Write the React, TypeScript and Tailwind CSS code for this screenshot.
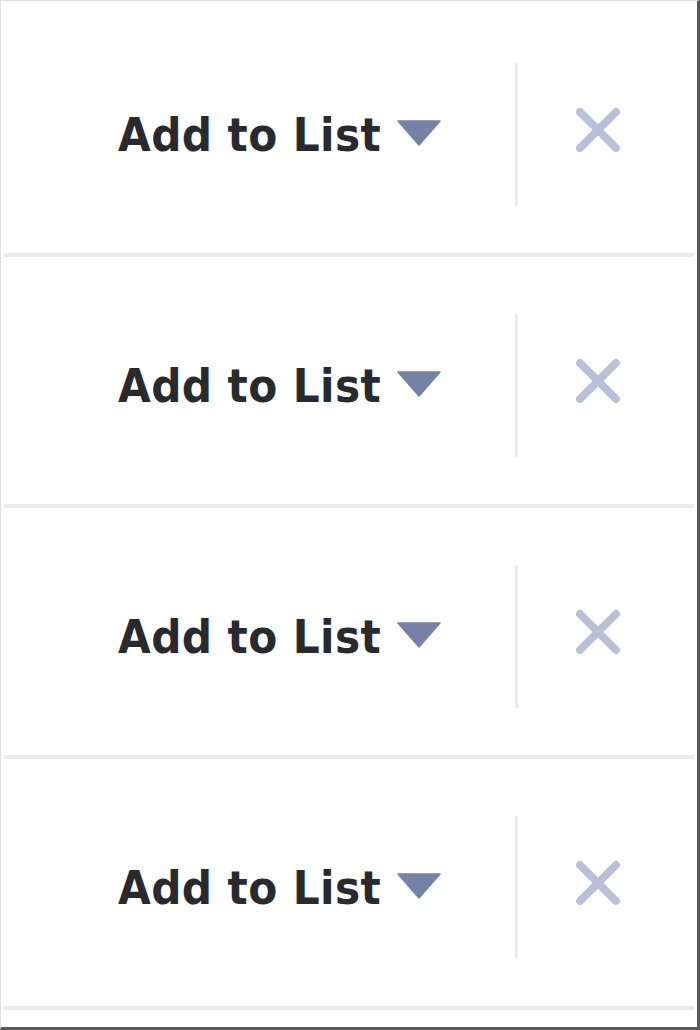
import React from "react";

function Row() {
  return (
    <div className="mx-[3px] flex h-[251px] items-center border-b-4 border-[#ebebed]">
      <div className="flex w-[511px] items-center pl-[114px] pt-[10px]">
        <span
          className="text-[47px] font-bold leading-none text-[#282a2e] tracking-[0.4px]"
          style={{ fontFamily: '"DejaVu Sans Condensed", "DejaVu Sans", sans-serif' }}
        >
          Add to List
        </span>
        <svg className="ml-[15px] -mt-[3px]" width="46" height="26" viewBox="0 0 46 26">
          <polygon points="2,1 44,1 23,25" fill="#7482a6" stroke="#7482a6" strokeWidth="1.5" strokeLinejoin="round" />
        </svg>
      </div>
      <div className="mt-[10px] h-[143px] w-[3px] bg-[#ececec]" />
      <div className="flex flex-1 items-center justify-center pr-[16px]">
        <svg width="50" height="50" viewBox="0 0 50 50" style={{ filter: "blur(0.6px)" }}>
          <path d="M7 7 L43 43 M43 7 L7 43" stroke="#b9c1d9" strokeWidth="8" strokeLinecap="round" />
        </svg>
      </div>
    </div>
  );
}

export default function App() {
  return (
    <div className="box-border flex h-[1030px] w-[700px] flex-col border-t border-l border-t-[#dcdcdc] border-l-[#e0e0e0] border-r-[3px] border-b-[3px] border-r-[#5a5a5a] border-b-[#5a5a5a] bg-white">
      <div className="h-[5px]" />
      <Row />
      <Row />
      <Row />
      <Row />
    </div>
  );
}
